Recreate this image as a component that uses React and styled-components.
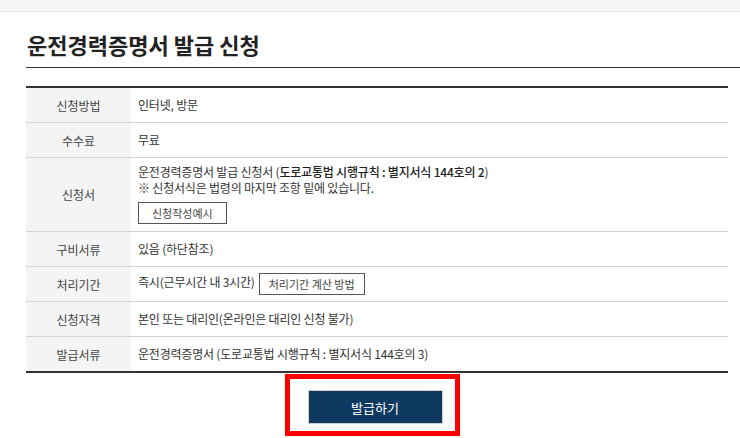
import React from 'react';
import styled, { createGlobalStyle } from 'styled-components';

const GlobalStyle = createGlobalStyle`
  body {
    margin: 0;
    background: #fff;
    font-family: "Noto Sans CJK KR", "Noto Sans", sans-serif;
    color: #333;
  }
`;

const TopBar = styled.div`
  height: 11px;
  background: #f7f5f5;
  border-bottom: 1px solid #e6e6e6;
`;

const Page = styled.div`
  padding-left: 26px;
`;

const Title = styled.h2`
  margin: 0;
  padding: 19px 0 10px 1px;
  font-size: 22px;
  font-weight: 700;
  line-height: 26px;
  color: #222;
  border-bottom: 1px solid #333;
`;

const InfoTable = styled.table`
  margin-top: 18px;
  width: 702px;
  border-collapse: collapse;
  border-top: 2px solid #333;
  border-bottom: 2px solid #333;
  font-size: 12px;
`;

const Row = styled.tr`
  border-bottom: 1px solid #d4d4d4;
  &:last-child {
    border-bottom: none;
  }
`;

const Th = styled.th`
  width: 105px;
  height: 34px;
  padding: 0;
  background: #f4f4f4;
  font-weight: 400;
  color: #444;
  text-align: center;
`;

const Td = styled.td`
  padding: ${p => (p.$tall ? '6px 7px 7px' : '0 7px')};
  color: #333;
  line-height: 16px;
  letter-spacing: -0.2px;
`;

const Strong = styled.span`
  font-weight: 500;
  color: #222;
`;

const SmallButton = styled.button`
  display: ${p => (p.$block ? 'block' : 'inline-block')};
  margin: ${p => (p.$block ? '6px 0 0' : '0 0 0 4px')};
  height: 22px;
  padding: 0 ${p => p.$pad}px;
  background: #fff;
  border: 1px solid #555;
  font-family: inherit;
  font-size: 11px;
  color: #444;
  vertical-align: middle;
  cursor: pointer;
`;

const Actions = styled.div`
  display: flex;
  justify-content: center;
  padding-top: 1px;
  width: 692px;
`;

const Highlight = styled.div`
  padding: 11px 12px 7px 18px;
  border: 5px solid #ff0000;
`;

const IssueButton = styled.button`
  width: 135px;
  height: 34px;
  background: #0f3a60;
  border: 1px solid #cfcfcf;
  color: #fff;
  font-family: inherit;
  font-size: 13px;
  cursor: pointer;
`;

const rows = [
  { label: '신청방법', value: '인터넷, 방문' },
  { label: '수수료', value: '무료' },
];

export default function App() {
  return (
    <>
      <GlobalStyle />
      <TopBar />
      <Page>
        <Title>운전경력증명서 발급 신청</Title>
        <InfoTable>
          <tbody>
            {rows.map(r => (
              <Row key={r.label}>
                <Th>{r.label}</Th>
                <Td>{r.value}</Td>
              </Row>
            ))}
            <Row>
              <Th>신청서</Th>
              <Td $tall>
                운전경력증명서 발급 신청서 (<Strong>도로교통법 시행규칙 : 별지서식 144호의 2</Strong>)
                <br />
                ※ 신청서식은 법령의 마지막 조항 밑에 있습니다.
                <SmallButton $block $pad={13}>신청작성예시</SmallButton>
              </Td>
            </Row>
            <Row>
              <Th>구비서류</Th>
              <Td>있음 (하단참조)</Td>
            </Row>
            <Row>
              <Th>처리기간</Th>
              <Td>
                즉시(근무시간 내 3시간)
                <SmallButton $pad={9}>처리기간 계산 방법</SmallButton>
              </Td>
            </Row>
            <Row>
              <Th>신청자격</Th>
              <Td>본인 또는 대리인(온라인은 대리인 신청 불가)</Td>
            </Row>
            <Row>
              <Th>발급서류</Th>
              <Td>운전경력증명서 (도로교통법 시행규칙 : 별지서식 144호의 3)</Td>
            </Row>
          </tbody>
        </InfoTable>
        <Actions>
          <Highlight>
            <IssueButton>발급하기</IssueButton>
          </Highlight>
        </Actions>
      </Page>
    </>
  );
}
